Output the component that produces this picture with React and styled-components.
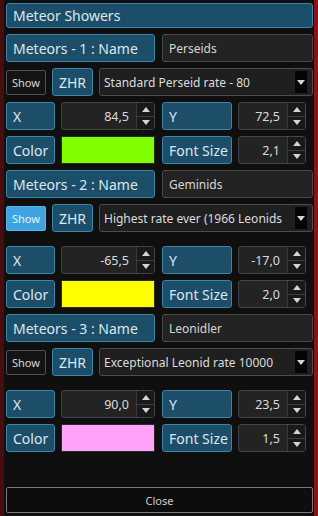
import React from 'react';
import styled, {createGlobalStyle, css} from 'styled-components';

const GlobalStyle = createGlobalStyle`
    html, body {
        margin: 0;
        padding: 0;
        background: #0f0f10;
    }
    body {
        font-family: "Noto Sans", "Open Sans", sans-serif;
    }
`;

const meteors = [
    {
        index: 1,
        name: 'Perseids',
        show: false,
        zhr: 'Standard Perseid rate - 80',
        x: '84,5',
        y: '72,5',
        color: '#7fff00',
        fontSize: '2,1',
        spaced: false,
    },
    {
        index: 2,
        name: 'Geminids',
        show: true,
        zhr: 'Highest rate ever (1966 Leonids',
        x: '-65,5',
        y: '-17,0',
        color: '#ffff00',
        fontSize: '2,0',
        spaced: true,
    },
    {
        index: 3,
        name: 'Leonidler',
        show: false,
        zhr: 'Exceptional Leonid rate 10000',
        x: '90,0',
        y: '23,5',
        color: '#ffa2f8',
        fontSize: '1,5',
        spaced: true,
    },
];

function Spin({value}) {
    return (
        <SpinBox>
            <SpinValue>{value}</SpinValue>
            <Spinner>
                <SpinHalf><Arrow $up/></SpinHalf>
                <SpinHalf><Arrow/></SpinHalf>
            </Spinner>
        </SpinBox>
    );
}

function MeteorBlock({m}) {
    return (
        <>
            <Row $cols="149px 151px" $gap="7px">
                <Label>Meteors - {m.index} : Name</Label>
                <TextInput>{m.name}</TextInput>
            </Row>
            <Row $cols="40px 41px 214px" $gap="6px">
                <ShowButton $active={m.show}>Show</ShowButton>
                <Label $center>ZHR</Label>
                <Select>
                    <SelectText>{m.zhr}</SelectText>
                    <SelectArrow><Arrow/></SelectArrow>
                </Select>
            </Row>
            <Row $cols="49px 94px 71px 68px" $gap="6px" $spaced={m.spaced}>
                <Label>X</Label>
                <Spin value={m.x}/>
                <Label $shift>Y</Label>
                <Spin value={m.y}/>
            </Row>
            <Row $cols="49px 94px 71px 68px" $gap="6px">
                <Label>Color</Label>
                <Swatch style={{background: m.color}}/>
                <Label $shift>Font Size</Label>
                <Spin value={m.fontSize}/>
            </Row>
        </>
    );
}

export default function App() {
    return (
        <>
            <GlobalStyle/>
            <Panel>
                <Title>Meteor Showers</Title>
                {meteors.map(m => <MeteorBlock key={m.index} m={m}/>)}
                <CloseButton>Close</CloseButton>
            </Panel>
        </>
    );
}

const Panel = styled.div`
    box-sizing: border-box;
    width: 318px;
    min-height: 516px;
    display: flex;
    flex-direction: column;
    gap: 6px;
    padding: 3px 1px 3px 2px;
    background: #0f0f10;
    border-left: 4px solid #4a0d0f;
    border-right: 4px solid #8a1318;
`;

const blueBox = css`
    box-sizing: border-box;
    background: #1c4e69;
    border: 1px solid #3e83a8;
    border-radius: 3px;
    color: #dde7ee;
    font-size: 14px;
    display: flex;
    align-items: center;
    white-space: nowrap;
`;

const Title = styled.div`
    ${blueBox};
    height: 25px;
    padding: 0 6px;
`;

const Row = styled.div`
    display: grid;
    grid-template-columns: ${p => p.$cols};
    column-gap: ${p => p.$gap};
    height: 28px;
    align-items: center;
    margin-top: ${p => (p.$spaced ? '8px' : '0')};
`;

const Label = styled.div`
    ${blueBox};
    height: 28px;
    padding: 0 6px;
    justify-content: ${p => (p.$center ? 'center' : 'flex-start')};
    margin-left: ${p => (p.$shift ? '1px' : '0')};
`;

const TextInput = styled.div`
    box-sizing: border-box;
    height: 28px;
    background: #232324;
    border: 1px solid #4a4a4c;
    border-radius: 3px;
    color: #d6d6d6;
    font-size: 12px;
    display: flex;
    align-items: center;
    padding: 0 6px;
`;

const ShowButton = styled.div`
    box-sizing: border-box;
    height: 25px;
    border-radius: 2px;
    font-size: 11px;
    display: flex;
    align-items: center;
    justify-content: center;
    background: ${p => (p.$active ? '#3fa3df' : '#141415')};
    border: 1px solid ${p => (p.$active ? '#5ab6ea' : '#505052')};
    color: ${p => (p.$active ? '#eaf5fc' : '#d8d8d8')};
`;

const Select = styled.div`
    box-sizing: border-box;
    height: 28px;
    background: #1f1f20;
    border: 1px solid #4d4d4f;
    border-radius: 3px;
    display: flex;
    align-items: center;
    padding: 0 4px;
    gap: 3px;
`;

const SelectText = styled.div`
    flex: 1;
    min-width: 0;
    overflow: hidden;
    white-space: nowrap;
    color: #dcdcdc;
    font-size: 12px;
`;

const SelectArrow = styled.div`
    flex: none;
    width: 12px;
    height: 22px;
    background: #050505;
    display: flex;
    align-items: center;
    justify-content: center;
    margin-right: 1px;
`;

const Arrow = styled.span`
    width: 0;
    height: 0;
    border-left: 4px solid transparent;
    border-right: 4px solid transparent;
    ${p => (p.$up
        ? 'border-bottom: 5px solid #d4d4d4;'
        : 'border-top: 5px solid #d4d4d4;')}
`;

const SpinBox = styled.div`
    box-sizing: border-box;
    height: 28px;
    background: #232324;
    border: 1px solid #444446;
    border-radius: 3px;
    display: flex;
    align-items: stretch;
`;

const SpinValue = styled.div`
    flex: 1;
    display: flex;
    align-items: center;
    justify-content: flex-end;
    padding-right: 7px;
    color: #dadada;
    font-size: 12.5px;
`;

const Spinner = styled.div`
    width: 17px;
    display: flex;
    flex-direction: column;
    border-left: 1px solid #3a3a3c;
`;

const SpinHalf = styled.div`
    flex: 1;
    display: flex;
    align-items: center;
    justify-content: center;
    background: #19191a;
    & + & {
        border-top: 1px solid #3a3a3c;
    }
`;

const Swatch = styled.div`
    box-sizing: border-box;
    height: 28px;
    border: 1px solid #2a2a2a;
`;

const CloseButton = styled.div`
    box-sizing: border-box;
    margin-top: auto;
    height: 26px;
    border: 1px solid #7a7a7c;
    border-radius: 2px;
    background: #0d0d0e;
    color: #cfcfcf;
    font-size: 11px;
    display: flex;
    align-items: center;
    justify-content: center;
`;
